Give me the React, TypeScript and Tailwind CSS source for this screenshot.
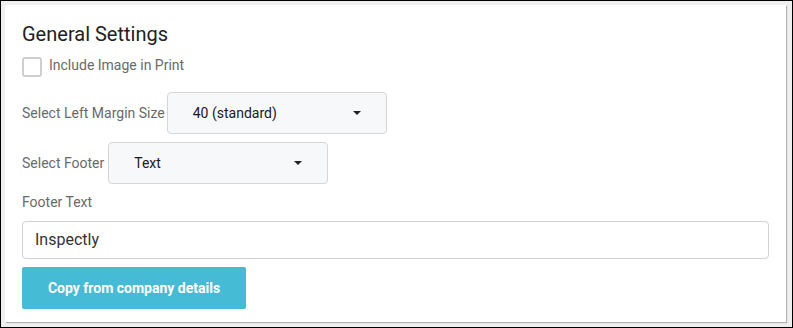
import React from 'react'

function Caret() {
  return (
    <svg width="8" height="4" viewBox="0 0 8 4" className="shrink-0">
      <path d="M0 0h8L4 4z" fill="#222" />
    </svg>
  )
}

function SelectBox({ value, width }: { value: string; width: string }) {
  return (
    <div
      className={`${width} h-[42px] flex items-center justify-between px-[25px] bg-[#f7f8fa] border border-[#d6d6d6] rounded-[4px] text-[14px] text-[#1a1a1a]`}
    >
      <span>{value}</span>
      <Caret />
    </div>
  )
}

export default function App() {
  return (
    <div
      className="w-[793px] h-[328px] border border-black bg-[#efefef] pt-[4px] pl-[4px] pr-[6px] pb-[5px]"
      style={{ fontFamily: 'Roboto, "Liberation Sans", sans-serif' }}
    >
      <div className="h-full bg-white shadow-[1px_1px_1px_rgba(0,0,0,0.25)] pt-[17px] pl-[17px] pr-[17px] flex flex-col">
        <h2 className="text-[20px] leading-[24px] text-[#222]">General Settings</h2>

        {/* checkbox */}
        <div className="mt-[11px] flex items-start gap-[7px]">
          <div className="w-[20px] h-[20px] border-2 border-[#cfcfcf] rounded-[3px] bg-white" />
          <span className="text-[14px] leading-[16px] text-[#6a6a6a]">Include Image in Print</span>
        </div>

        <div className="mt-[15px] flex items-center gap-[2px]">
          <span className="text-[14px] text-[#6a6a6a]">Select Left Margin Size</span>
          <SelectBox value="40 (standard)" width="w-[220px]" />
        </div>

        <div className="mt-[8px] flex items-center gap-[4px]">
          <span className="text-[14px] text-[#6a6a6a]">Select Footer</span>
          <SelectBox value="Text" width="w-[220px]" />
        </div>

        <label className="mt-[8px] text-[14px] leading-[20px] text-[#6a6a6a]">Footer Text</label>

        <div className="mt-[9px] h-[38px] w-[747px] border border-[#ced2da] rounded-[4px] flex items-center pl-[12px] text-[16px] text-[#333]">
          Inspectly
        </div>

        <button className="mt-[8px] w-[224px] h-[42px] bg-[#46bbd6] rounded-[2px] text-white text-[14px] font-bold">
          Copy from company details
        </button>
      </div>
    </div>
  )
}
